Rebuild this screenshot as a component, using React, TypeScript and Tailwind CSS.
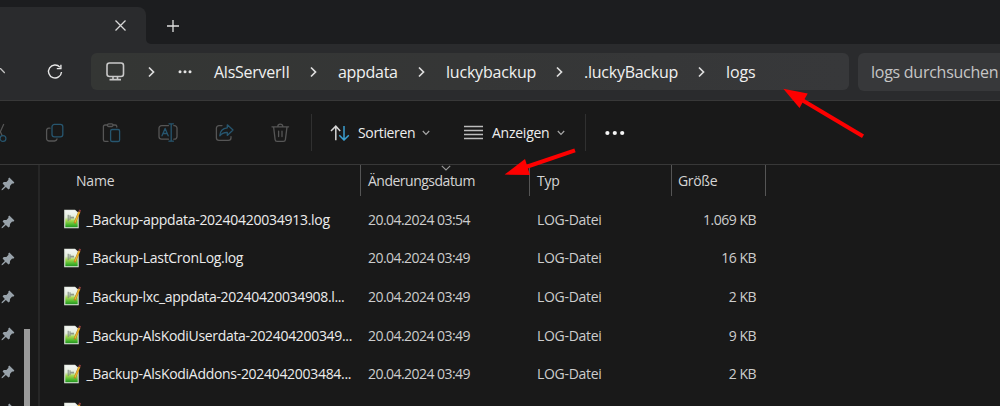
import type { ReactNode } from 'react';

interface LogFile {
  name: string;
  nameClass: string;
  date: string;
  size: string;
}

interface Crumb {
  label: string;
  boxClass: string;
  textClass: string;
}

const files: LogFile[] = [
  { name: '_Backup-appdata-20240420034913.log', nameClass: 'tracking-[-0.27px]', date: '20.04.2024 03:54', size: '1.069 KB' },
  { name: '_Backup-LastCronLog.log', nameClass: 'tracking-[-0.3px]', date: '20.04.2024 03:49', size: '16 KB' },
  { name: '_Backup-lxc_appdata-20240420034908.l...', nameClass: 'tracking-[-0.34px]', date: '20.04.2024 03:49', size: '2 KB' },
  { name: '_Backup-AlsKodiUserdata-202404200349...', nameClass: 'tracking-[-0.32px]', date: '20.04.2024 03:49', size: '9 KB' },
  { name: '_Backup-AlsKodiAddons-2024042003484...', nameClass: 'tracking-[-0.3px]', date: '20.04.2024 03:49', size: '2 KB' },
  { name: '', nameClass: '', date: '', size: '' },
];

const crumbs: Crumb[] = [
  { label: 'AlsServerII', boxClass: 'w-[96px]', textClass: 'tracking-[-0.25px]' },
  { label: 'appdata', boxClass: 'w-[80px]', textClass: 'tracking-[-0.3px]' },
  { label: 'luckybackup', boxClass: 'w-[110px]', textClass: 'tracking-[-0.2px]' },
  { label: '.luckyBackup', boxClass: 'w-[114px]', textClass: 'tracking-[-0.25px]' },
];

function ChevronRight() {
  return (
    <svg className="w-[7px] h-[12px] shrink-0" viewBox="0 0 7 12" fill="none" stroke="#dedede" strokeWidth="1.7">
      <path d="M1 1.5 5.5 6 1 10.5" />
    </svg>
  );
}

function ChevronDown() {
  return (
    <svg className="w-[8px] h-[6px] shrink-0" viewBox="0 0 8 6" fill="none" stroke="#a8a8a8" strokeWidth="1.2">
      <path d="M0.8 1 4 4.4 7.2 1" />
    </svg>
  );
}

function ToolIcon({ children }: { children: ReactNode }) {
  return (
    <svg className="w-5 h-5 shrink-0" viewBox="0 0 20 20" fill="none" stroke="#565656" strokeWidth="1.3" strokeLinecap="round" strokeLinejoin="round">
      {children}
    </svg>
  );
}

function Pin() {
  return (
    <svg className="w-[14px] h-[14px] shrink-0" viewBox="0 0 14 14" fill="#98a2aa">
      <path d="M8.3 0.6 13.4 5.6 12.2 6.8 11.1 6.6 9 8.9 8.8 11.4 7.5 12.5 4.9 10 1.6 13 0.5 13.2 0.8 12.1 3.9 8.9 1.6 6.5 2.7 5 5.4 4.9 7.5 2.8 7.2 1.7Z" />
    </svg>
  );
}

function LogIcon() {
  return (
    <svg className="w-[18px] h-[20px] shrink-0" viewBox="0 0 18 20">
      <defs>
        <linearGradient id="paper" x1="0" y1="0" x2="0" y2="1">
          <stop offset="0" stopColor="#f4f6f5" />
          <stop offset="0.4" stopColor="#e4eedc" />
          <stop offset="0.6" stopColor="#a5d850" />
          <stop offset="0.85" stopColor="#48b62c" />
          <stop offset="1" stopColor="#239023" />
        </linearGradient>
      </defs>
      <path d="M0.2 0.7H11L14.7 4V19.3H0.2Z" fill="#e3e9df" />
      <path d="M1.3 1.6H11L13.7 4.6V18.3H1.3Z" fill="url(#paper)" />
      <path d="M4.2 5.8V12.2M6 6.3V11.2" stroke="#7a847b" strokeWidth="1" />
      <path d="M6 8.6H10" stroke="#8f998a" strokeWidth="1.8" />
      <path d="M10.6 14.4 15.4 2.7" stroke="#a87b1b" strokeWidth="2.2" />
      <path d="M10.9 13.5 15.3 3" stroke="#efb32e" strokeWidth="1.4" />
      <path d="M15.3 2.8 16.2 0.8" stroke="#8b3b3d" strokeWidth="2" />
    </svg>
  );
}

function TabStrip() {
  return (
    <div className="flex h-11 bg-[#1c1d1f]">
      <div className="mt-[7px] flex w-[146px] items-center rounded-tr-lg bg-[#2a2b2d] pl-[115px]">
        <svg className="w-[11px] h-[11px]" viewBox="0 0 11 11" stroke="#d8d8d8" strokeWidth="1.3">
          <path d="M0.5 0.5 10.5 10.5M10.5 0.5 0.5 10.5" />
        </svg>
      </div>
      <div className="flex-1 bg-[#2a2b2d]">
        <div className="h-full rounded-bl-[5px] bg-[#1c1d1f] pl-[21px] pt-[20px]">
          <svg className="w-3 h-3" viewBox="0 0 12 12" stroke="#e0e0e0" strokeWidth="1.3">
            <path d="M6 0V12M0 6H12" />
          </svg>
        </div>
      </div>
    </div>
  );
}

function AddressBar() {
  return (
    <div className="flex h-[57px] border-b border-[#383838] bg-[#2a2b2d] pt-[9px]">
      <div className="flex h-[37px] w-[91px] shrink-0 items-center">
        <svg className="mr-[42px] h-[8px] w-[5px]" viewBox="0 0 5 8" fill="none" stroke="#c4c4c4" strokeWidth="1.3">
          <path d="M-3 3 0 0 4.8 5" />
        </svg>
        <svg className="h-4 w-4" viewBox="0 0 16 16" fill="none" stroke="#e6e6e6" strokeWidth="1.4">
          <path d="M12.9 3.2A6.5 6.5 0 1 0 14.5 8" />
          <path d="M13.9 0.8V4.6H9.8" />
        </svg>
      </div>
      <div className="flex h-[37px] w-[758px] shrink-0 items-center rounded-md bg-linear-to-r from-[#343634] via-[#353636] to-[#37383a] pl-[15px] text-[16px] text-[#f0f0f0]">
        <svg className="mr-[23px] h-[19px] w-[19px] shrink-0" viewBox="0 0 19 19" fill="none" stroke="#c9c9c9" strokeWidth="1.6">
          <rect x="1" y="1" width="16.5" height="13.5" rx="2.5" />
          <path d="M7 14.5V17M11.5 14.5V17M3.5 17.6H15" />
        </svg>
        <ChevronRight />
        <svg className="ml-[23px] h-[4px] w-[14px] shrink-0" viewBox="0 0 14 4" fill="#e5e5e5">
          <circle cx="2" cy="1.8" r="1.5" />
          <circle cx="7" cy="1.8" r="1.5" />
          <circle cx="12" cy="1.8" r="1.5" />
        </svg>
        <div className="ml-[22px] flex items-center">
          {crumbs.map((crumb) => (
            <div key={crumb.label} className="flex items-center">
              <span className={`${crumb.boxClass} shrink-0 whitespace-nowrap ${crumb.textClass}`}>{crumb.label}</span>
              <span className="w-[28px] shrink-0"><ChevronRight /></span>
            </div>
          ))}
          <span className="tracking-[-0.1px]">logs</span>
        </div>
      </div>
      <div className="ml-[9px] flex h-[38px] flex-1 items-center rounded-l-md bg-[#37383a] pl-[13px] text-[16px] text-[#c6c6c6]">
        <span className="whitespace-nowrap tracking-[-0.26px]">logs durchsuchen</span>
      </div>
    </div>
  );
}

function Toolbar() {
  return (
    <div className="flex h-[63px] items-center text-[14px] text-[#ededed]">
      <svg className="h-5 w-[7px] shrink-0" viewBox="0 0 7 20" fill="none" strokeWidth="1.2">
        <path d="M3.8 1 0 9.5M0 8 2.4 13" stroke="#565656" />
        <circle cx="3" cy="15.5" r="2.9" stroke="#27566f" />
      </svg>
      <div className="ml-[38px] flex gap-[36.5px]">
        <ToolIcon>
          <path d="M5 5.2H3.8A2.4 2.4 0 0 0 1.6 7.6V15.4A2.6 2.6 0 0 0 4.2 18H9.5A2.6 2.6 0 0 0 12 16" />
          <rect x="7" y="1.4" width="10.8" height="12.4" rx="2.4" stroke="#27566f" />
        </ToolIcon>
        <ToolIcon>
          <path d="M5.5 2H3A1.6 1.6 0 0 0 1.4 3.6V16.8A1.6 1.6 0 0 0 3 18.4H6M11 2H13.2A1.6 1.6 0 0 1 14.8 3.6V4" />
          <rect x="5.5" y="0.8" width="5.5" height="2.7" rx="1.2" />
          <rect x="8.6" y="6.5" width="9" height="12" rx="1.6" stroke="#27566f" />
        </ToolIcon>
        <ToolIcon>
          <path d="M10.5 2.6H3.6A2.6 2.6 0 0 0 1 5.2V13.6A2.6 2.6 0 0 0 3.6 16.2H10.5M15.8 2.6H16.4A2.6 2.6 0 0 1 19 5.2V13.6A2.6 2.6 0 0 1 16.4 16.2H15.8" />
          <path d="M4 12.8 7.1 5.4 10.2 12.8M5 10.5H9.2M11 0.8H15.4M13.2 0.8V18.2M11 18.2H15.4" stroke="#27566f" />
        </ToolIcon>
        <ToolIcon>
          <path d="M7 2.6H4A2.6 2.6 0 0 0 1.4 5.2V14.8A2.6 2.6 0 0 0 4 17.4H13.4A2.6 2.6 0 0 0 16 14.8V13.6" />
          <path d="M12.3 1.8 18 7.1 12.3 12.4V9.5C8.7 9.3 6.6 10.4 4.8 12.8 5 8.5 7.6 5.2 12.3 4.8Z" stroke="#27566f" />
        </ToolIcon>
        <ToolIcon>
          <path d="M1 3.8H17.6M2.6 3.8 4.1 16.6A2 2 0 0 0 6.1 18.4H12.4A2 2 0 0 0 14.4 16.6L16 3.8M6.8 3.6A2.5 2.5 0 0 1 11.8 3.6M7.6 8.2V13.6M11 8.2V13.6" />
        </ToolIcon>
      </div>
      <div className="ml-[20px] h-[37px] w-px bg-[#303030]" />
      <svg className="ml-[18px] h-[16px] w-[20px] shrink-0" viewBox="0 0 20 16" fill="none" strokeWidth="1.5">
        <path d="M5.8 15.2V1.2M1 6 5.8 1.2 10.2 6" stroke="#d5d5d5" />
        <path d="M14 1V15M9.3 10.2 14 15 18.8 10.2" stroke="#3b9fd0" />
      </svg>
      <span className="ml-[8px] w-[64px] shrink-0 tracking-[-0.35px]">Sortieren</span>
      <ChevronDown />
      <svg className="ml-[34px] h-[16px] w-[20px] shrink-0" viewBox="0 0 20 16" stroke="#bdbdbd" strokeWidth="1.3">
        <path d="M0 1.5H19M0 5.5H19M0 9.5H19M0 13.5H19" />
      </svg>
      <span className="ml-[8px] w-[65px] shrink-0 tracking-[-0.25px]">Anzeigen</span>
      <ChevronDown />
      <div className="ml-[20px] h-[37px] w-px bg-[#303030]" />
      <svg className="ml-[19px] h-[6px] w-[20px]" viewBox="0 0 20 6" fill="#f5f5f5">
        <circle cx="2.4" cy="3" r="2.1" />
        <circle cx="9.8" cy="3" r="2.1" />
        <circle cx="17.2" cy="3" r="2.1" />
      </svg>
    </div>
  );
}

function Sidebar() {
  return (
    <div className="flex w-[38px] shrink-0">
      <div className="flex w-[24px] flex-col gap-[23.6px] pl-[0.5px] pt-[12px]">
        {[0, 1, 2, 3, 4, 5, 6].map((i) => (
          <Pin key={i} />
        ))}
      </div>
      <div className="mt-[164px] h-[100px] w-[6px] bg-[#9a9a9a]" />
    </div>
  );
}

function FileList() {
  return (
    <div className="flex-1 border-l-2 border-[#262626] text-[14px]">
      <div className="flex h-[31px] text-[#d5d5d5]">
        <div className="w-[321px] shrink-0 border-r border-[#555] pl-[36px] pt-[5px]">
          <span className="tracking-[-0.2px]">Name</span>
        </div>
        <div className="relative w-[169px] shrink-0 border-r border-[#555] pl-[7px] pt-[5px]">
          <svg className="absolute left-[80px] top-0 h-[6px] w-[10px]" viewBox="0 0 10 6" fill="none" stroke="#999" strokeWidth="1.1">
            <path d="M0.8 0.8 5 5 9.2 0.8" />
          </svg>
          <span className="tracking-[-0.5px]">Änderungsdatum</span>
        </div>
        <div className="w-[142px] shrink-0 border-r border-[#555] pl-[7px] pt-[5px]">
          <span className="tracking-[-0.2px]">Typ</span>
        </div>
        <div className="w-[94px] shrink-0 border-r border-[#555] pl-[6px] pt-[5px]">
          <span className="tracking-[-0.35px]">Größe</span>
        </div>
      </div>
      <div className="pt-[4px]">
        {files.map((file, i) => (
          <div key={i} className="flex h-[38.6px] items-center whitespace-nowrap text-[#cdcdcd]">
            <div className="flex w-[328px] shrink-0 items-center pl-[24px] text-[#ececec]">
              <LogIcon />
              <span className={`ml-[4.5px] ${file.nameClass}`}>{file.name}</span>
            </div>
            <div className="w-[169px] shrink-0 tracking-[-0.55px]">{file.date}</div>
            <div className="w-[120px] shrink-0 tracking-[-0.3px]">{file.date && 'LOG-Datei'}</div>
            <div className="w-[99px] shrink-0 text-right tracking-[-0.5px]">{file.size}</div>
          </div>
        ))}
      </div>
    </div>
  );
}

// Red pointers drawn over the path and the date column
function Arrows() {
  return (
    <svg className="pointer-events-none absolute inset-0 h-[406px] w-[1000px]" viewBox="0 0 1000 406" fill="#fd0000" stroke="#fd0000">
      <path d="M863 136.3 802 100" strokeWidth="4" />
      <path d="M783.3 88.7 807.7 93.5 799.5 108Z" stroke="none" />
      <path d="M575 150.3 526 167" strokeWidth="4" />
      <path d="M504.6 174.6 525 159 530 175Z" stroke="none" />
    </svg>
  );
}

export default function App() {
  return (
    <div className="relative h-[406px] w-[1000px] overflow-hidden bg-[#191919] font-['Open_Sans','Noto_Sans',sans-serif]">
      <TabStrip />
      <AddressBar />
      <Toolbar />
      <div className="flex h-[242px] overflow-hidden border-t border-[#383838]">
        <Sidebar />
        <FileList />
      </div>
      <Arrows />
    </div>
  );
}
